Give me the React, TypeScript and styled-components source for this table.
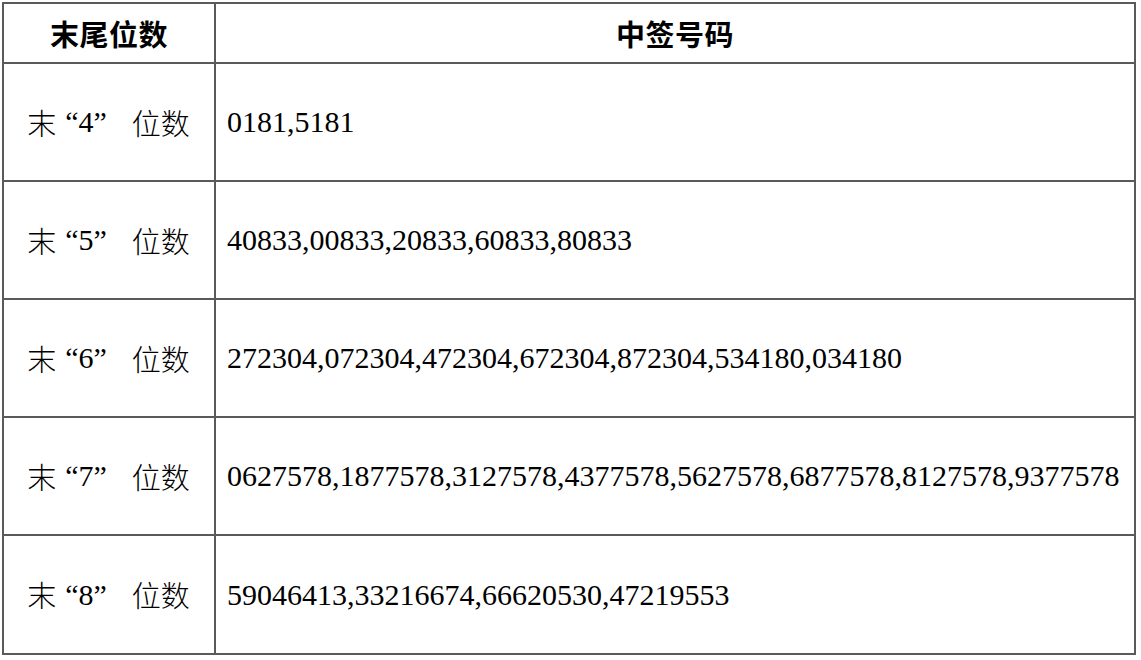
import React from "react";
import styled, { createGlobalStyle } from "styled-components";

const GlobalStyle = createGlobalStyle`
  html, body { margin: 0; padding: 0; background: #ffffff; }
  body { font-family: "Liberation Serif", "Times New Roman", Tinos, "Noto Sans CJK SC", serif; color: #000; }
`;

const Page = styled.div`
  padding: 2px 0 0 2px;
  width: 1141px;
  height: 660px;
  box-sizing: border-box;
  background: #fff;
`;

const Grid = styled.div`
  display: grid;
  grid-template-columns: 212px 920px;
  grid-template-rows: 60px repeat(4, 118px) 119px;
  border-top: 2px solid #5a5a5a;
  border-left: 2px solid #5a5a5a;
  width: max-content;
`;

const Cell = styled.div<{ $align?: "center" | "left" }>`
  box-sizing: border-box;
  border-right: 2px solid #5a5a5a;
  border-bottom: 2px solid #5a5a5a;
  display: flex;
  align-items: center;
  justify-content: ${(p) => (p.$align === "left" ? "flex-start" : "center")};
  padding-left: ${(p) => (p.$align === "left" ? "11px" : "0")};
`;

const HeadText = styled.span`
  font-family: "Noto Sans CJK SC", sans-serif;
  font-weight: 700;
  font-size: 29px;
  line-height: 1;
  letter-spacing: 0.5px;
`;

const LabelCjk = styled.span`
  font-family: "Noto Sans CJK SC", sans-serif;
  font-weight: 300;
  font-size: 29px;
  line-height: 1;
`;

const LabelSerif = styled.span<{ $ml?: number; $mr?: number }>`
  font-family: "Liberation Serif", "Times New Roman", Tinos, serif;
  font-size: 30px;
  line-height: 1;
  margin-left: ${(p) => p.$ml ?? 0}px;
  margin-right: ${(p) => p.$mr ?? 0}px;
`;

const Label = styled.div`
  display: flex;
  align-items: center;
  margin-left: -1px;
`;

const Numbers = styled.span`
  font-family: "Liberation Serif", "Times New Roman", Tinos, serif;
  font-size: 30px;
  line-height: 1;
  white-space: nowrap;
`;

const rows = [
  { d: "4", n: "0181,5181" },
  { d: "5", n: "40833,00833,20833,60833,80833" },
  { d: "6", n: "272304,072304,472304,672304,872304,534180,034180" },
  { d: "7", n: "0627578,1877578,3127578,4377578,5627578,6877578,8127578,9377578" },
  { d: "8", n: "59046413,33216674,66620530,47219553" },
];

export default function App() {
  return (
    <Page>
      <GlobalStyle />
      <Grid>
        <Cell>
          <HeadText>末尾位数</HeadText>
        </Cell>
        <Cell>
          <HeadText>中签号码</HeadText>
        </Cell>
        {rows.map((r) => (
          <React.Fragment key={r.d}>
            <Cell>
              <Label>
                <LabelCjk>末</LabelCjk>
                <LabelSerif $ml={9}>“</LabelSerif>
                <LabelSerif>{r.d}</LabelSerif>
                <LabelSerif $mr={25}>”</LabelSerif>
                <LabelCjk>位数</LabelCjk>
              </Label>
            </Cell>
            <Cell $align="left">
              <Numbers>{r.n}</Numbers>
            </Cell>
          </React.Fragment>
        ))}
      </Grid>
    </Page>
  );
}
